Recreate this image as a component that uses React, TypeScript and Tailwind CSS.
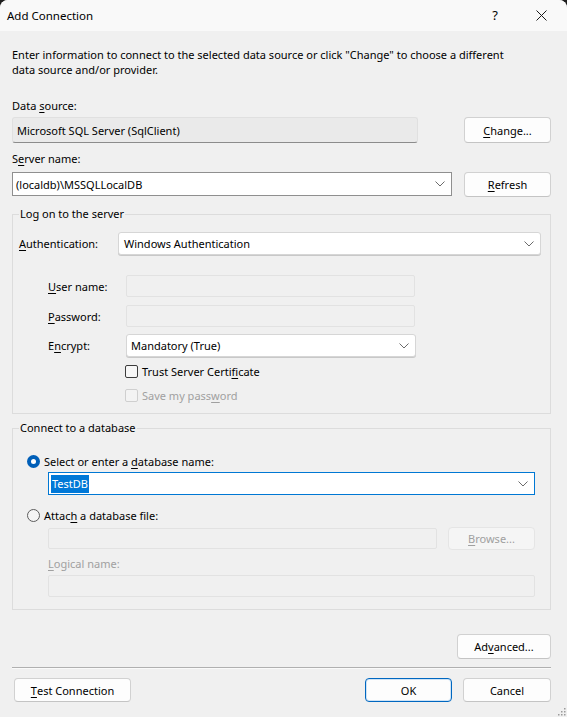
import React from 'react';

const Key = ({ children }: { children: React.ReactNode }) => (
  <span className="underline decoration-1 underline-offset-[2px]">{children}</span>
);

const Chevron = () => (
  <svg width="10" height="6" viewBox="0 0 10 6" className="shrink-0">
    <path d="M0.5 0.5 L5 5 L9.5 0.5" fill="none" stroke="#6b6b6b" strokeWidth="1" />
  </svg>
);

const Button = ({
  className,
  children,
  disabled,
  primary,
}: {
  className: string;
  children: React.ReactNode;
  disabled?: boolean;
  primary?: boolean;
}) => (
  <div
    className={[
      'flex items-center justify-center rounded-[4px] border',
      disabled
        ? 'bg-[#f5f5f5] border-[#e5e5e5] text-[#a0a0a0]'
        : primary
          ? 'bg-[#fdfdfd] border-[#0067c0] shadow-[inset_0_0_0_1px_#cfe3f5]'
          : 'bg-[#fdfdfd] border-[#d1d1d1] border-b-[#c4c4c4]',
      className,
    ].join(' ')}
  >
    {children}
  </div>
);

const Checkbox = ({ disabled }: { disabled?: boolean }) => (
  <div
    className={
      disabled
        ? 'w-[13px] h-[13px] rounded-[2px] border border-[#cfcfcf] bg-[#f3f3f3]'
        : 'w-[13px] h-[13px] rounded-[2px] border border-[#3c3c3c] bg-[#f7f7f7]'
    }
  />
);

const Radio = ({ checked }: { checked?: boolean }) =>
  checked ? (
    <div className="w-[13px] h-[13px] rounded-full bg-[#005fb8] flex items-center justify-center">
      <div className="w-[5px] h-[5px] rounded-full bg-white" />
    </div>
  ) : (
    <div className="w-[13px] h-[13px] rounded-full border border-[#5c5c5c] bg-[#f5f5f5]" />
  );

export default function App() {
  return (
    <div className="w-[567px] h-[717px] bg-[#1e1e1e]">
      <div className="relative w-full h-full bg-[#f0f0f0] rounded-t-[8px] overflow-hidden flex flex-col text-[11px] leading-[15px] text-black font-['Noto_Sans',sans-serif]">
        {/* title bar */}
        <div className="h-[31px] bg-[#f9f9f9] flex items-center pl-[7px] pr-[3px] shrink-0 text-[11.5px]">
          <span className="flex-1">Add Connection</span>
          <span className="w-[46px] text-center text-[13px]">?</span>
          <span className="w-[46px] flex justify-center">
            <svg width="11" height="11" viewBox="0 0 11 11">
              <path d="M0.5 0.5 L10.5 10.5 M10.5 0.5 L0.5 10.5" stroke="#1a1a1a" strokeWidth="1" />
            </svg>
          </span>
        </div>

        <div className="flex-1 flex flex-col pl-[12px] pr-[16px]">
          <p className="mt-[16px]">
            Enter information to connect to the selected data source or click "Change" to choose a different
            <br />
            data source and/or provider.
          </p>

          <div className="mt-[21px]">
            Data <Key>s</Key>ource:
          </div>
          <div className="mt-[4px] flex">
            <div className="w-[406px] h-[26px] flex items-center pl-[4px] bg-[#eaeaea] rounded-[3px] border border-[#e0e0e0] border-b-[#8c8c8c]">
              Microsoft SQL Server (SqlClient)
            </div>
            <Button className="ml-auto w-[87px] h-[26px]">
              <Key>C</Key>hange...
            </Button>
          </div>

          <div className="mt-[8px]">
            S<Key>e</Key>rver name:
          </div>
          <div className="mt-[6px] flex items-start">
            <div className="w-[440px] h-[24px] flex items-center pl-[3px] pr-[6px] bg-white border border-[#8f8f8f]">
              <span className="flex-1">(localdb)\MSSQLLocalDB</span>
              <Chevron />
            </div>
            <Button className="ml-auto w-[87px] h-[25px]">
              <Key>R</Key>efresh
            </Button>
          </div>

          <fieldset className="mt-[9px] border border-[#dcdcdc] pl-[6px] pr-[9px] pb-[10px]">
            <legend className="px-[1px] leading-[16px]">Log on to the server</legend>
            <div className="pt-[10px] flex items-center">
              <div className="w-[99px]">
                <Key>A</Key>uthentication:
              </div>
              <div className="flex-1 h-[23px] flex items-center pl-[5px] pr-[6px] bg-white border border-[#d6d6d6] rounded-[3px] shadow-[0_1px_0_#c8c8c8]">
                <span className="flex-1">Windows Authentication</span>
                <Chevron />
              </div>
            </div>

            <div className="mt-[20px] flex items-center">
              <div className="ml-[29px] w-[78px]">
                <Key>U</Key>ser name:
              </div>
              <div className="w-[289px] h-[22px] bg-[#f0f0f0] border border-[#e2e2e2] rounded-[2px]" />
            </div>
            <div className="mt-[8px] flex items-center">
              <div className="ml-[29px] w-[78px]">
                <Key>P</Key>assword:
              </div>
              <div className="w-[289px] h-[22px] bg-[#f0f0f0] border border-[#e2e2e2] rounded-[2px]" />
            </div>
            <div className="mt-[7px] flex items-center">
              <div className="ml-[29px] w-[78px]">
                E<Key>n</Key>crypt:
              </div>
              <div className="w-[290px] h-[23px] flex items-center pl-[4px] pr-[6px] bg-white border border-[#d6d6d6] rounded-[3px] shadow-[0_1px_0_#c8c8c8]">
                <span className="flex-1">Mandatory (True)</span>
                <Chevron />
              </div>
            </div>

            <div className="mt-[6px] ml-[106px] h-[16px] flex items-center gap-[4px]">
              <Checkbox />
              <span>
                Trust Server Certi<Key>f</Key>icate
              </span>
            </div>
            <div className="mt-[8px] ml-[106px] h-[16px] flex items-center gap-[4px] text-[#a0a0a0]">
              <Checkbox disabled />
              <span>
                Save my pass<Key>w</Key>ord
              </span>
            </div>
          </fieldset>

          <fieldset className="mt-[6px] border border-[#dcdcdc] pl-[14px] pr-[15px] pb-[12px]">
            <legend className="-ml-[8px] px-[1px] leading-[16px]">Connect to a database</legend>
            <div className="pt-[17px] h-[33px] flex items-end">
              <div className="h-[16px] flex items-center gap-[4px]">
                <Radio checked />
                <span>
                  Select or enter a <Key>d</Key>atabase name:
                </span>
              </div>
            </div>
            <div className="mt-[3px] ml-[21px] h-[23px] flex items-center pl-[2px] pr-[6px] bg-white border border-[#0078d4]">
              <span className="flex-1 flex">
                <span className="bg-[#0078d7] text-white px-[1px] leading-[18px]">TestDB</span>
              </span>
              <Chevron />
            </div>

            <div className="mt-[12px] h-[16px] flex items-center gap-[4px]">
              <Radio />
              <span>
                Attac<Key>h</Key> a database file:
              </span>
            </div>
            <div className="mt-[4px] ml-[21px] flex items-center">
              <div className="w-[389px] h-[21px] bg-[#f0f0f0] border border-[#e2e2e2] rounded-[2px]" />
              <Button disabled className="ml-auto w-[87px] h-[23px]">
                <Key>B</Key>rowse...
              </Button>
            </div>
            <div className="mt-[6px] ml-[21px] leading-[16px] text-[#a0a0a0]">
              <Key>L</Key>ogical name:
            </div>
            <div className="mt-[3px] ml-[21px] h-[22px] bg-[#f0f0f0] border border-[#e2e2e2] rounded-[2px]" />
          </fieldset>

          <Button className="mt-[24px] self-end w-[94px] h-[25px]">
            Ad<Key>v</Key>anced...
          </Button>

          <div className="mt-[8px] h-px bg-[#b0b0b0]" />
          <div className="h-px bg-[#fafafa]" />

          <div className="mt-[9px] flex">
            <Button className="ml-[2px] w-[117px] h-[24px]">
              <Key>T</Key>est Connection
            </Button>
            <Button primary className="ml-auto w-[87px] h-[24px]">
              OK
            </Button>
            <Button className="ml-[11px] w-[88px] h-[24px]">Cancel</Button>
          </div>
        </div>

        {/* size grip */}
        <svg width="8" height="8" viewBox="0 0 8 8" className="absolute right-[1px] bottom-[1px]">
          <rect x="6" y="0" width="1.5" height="1.5" fill="#9a9a9a" />
          <rect x="3" y="3" width="1.5" height="1.5" fill="#9a9a9a" />
          <rect x="6" y="3" width="1.5" height="1.5" fill="#9a9a9a" />
          <rect x="0" y="6" width="1.5" height="1.5" fill="#9a9a9a" />
          <rect x="3" y="6" width="1.5" height="1.5" fill="#9a9a9a" />
          <rect x="6" y="6" width="1.5" height="1.5" fill="#9a9a9a" />
        </svg>
      </div>
    </div>
  );
}
